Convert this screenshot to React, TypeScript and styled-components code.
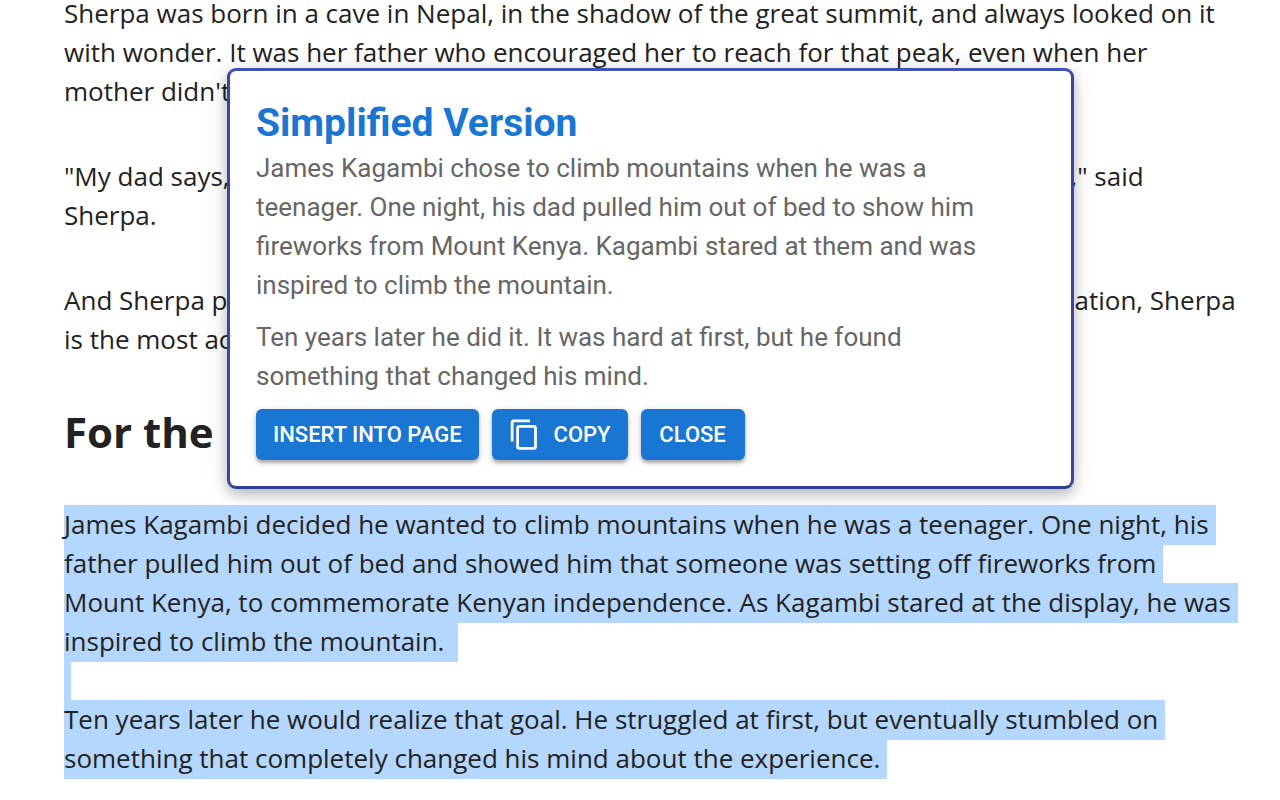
import React from 'react';
import styled, { createGlobalStyle } from 'styled-components';

const GlobalStyle = createGlobalStyle`
  *, *::before, *::after { box-sizing: border-box; }
  body { margin: 0; background: #fff; }
`;

const Page = styled.div`
  position: relative;
  min-height: 100vh;
  overflow: hidden;
`;

const Article = styled.article`
  margin-top: -6px;
  padding: 0 42px 22px 64px;
  color: #222;
  font-family: 'Open Sans', 'Noto Sans', sans-serif;
  font-size: 26px;
  line-height: 39px;
`;

const Paragraph = styled.p`
  margin: 0 0 46px;

  &:last-child { margin-bottom: 0; }
`;

const Heading = styled.h2`
  margin: 0 0 46px;
  font-size: 42px;
  line-height: 54px;
  font-weight: 700;
`;

const Selected = styled.mark`
  padding: 1px 7px 3px 0;
  background: #b3d7ff;
  color: inherit;
  box-decoration-break: clone;
  -webkit-box-decoration-break: clone;
`;

/* Stretch of a line that lies under the popup. */
const Covered = styled.span<{ $width: number }>`
  display: inline-block;
  width: ${({ $width }) => $width}px;
`;

const Popup = styled.section`
  position: absolute;
  top: 68px;
  left: 227px;
  right: 206px;
  padding: 26px;
  border: 3px solid;
  border-color: #3f51b5 #37489f #303f8f;
  border-radius: 9px;
  background: #fff;
  box-shadow: 0 6px 12px rgba(0, 0, 0, 0.2), 0 2px 24px rgba(0, 0, 0, 0.12);
  color: #666;
  font-family: Roboto, sans-serif;
  font-size: 26px;
  line-height: 39px;
`;

const PopupTitle = styled.h1`
  margin: 0;
  color: #1976d2;
  font-size: 39px;
  line-height: 52px;
  font-weight: 700;
`;

const PopupText = styled.p`
  margin: 0 0 13px;
  max-width: 750px;
`;

const Actions = styled.div`
  display: flex;
  gap: 13px;
`;

const Button = styled.button`
  display: flex;
  align-items: center;
  justify-content: center;
  gap: 13px;
  min-width: 104px;
  height: 51px;
  padding: 0 17px;
  border: 0;
  border-radius: 6px;
  background: #1976d2;
  box-shadow: 0 3px 3px rgba(0, 0, 0, 0.24), 0 2px 8px rgba(0, 0, 0, 0.16);
  color: #fff;
  font-family: inherit;
  font-size: 22px;
  font-weight: 500;
  text-transform: uppercase;
  cursor: pointer;

  svg { margin-left: -1px; }
`;

const CopyIcon = () => (
  <svg width="33" height="33" viewBox="0 0 24 24" fill="currentColor" aria-hidden="true">
    <path d="M16 1H4c-1.1 0-2 .9-2 2v14h2V3h12V1zm3 4H8c-1.1 0-2 .9-2 2v14c0 1.1.9 2 2 2h11c1.1 0 2-.9 2-2V7c0-1.1-.9-2-2-2zm0 16H8V7h11v14z" />
  </svg>
);

export default function App() {
  return (
    <>
      <GlobalStyle />
      <Page>
        <Article>
          <Paragraph>
            Sherpa was born in a cave in Nepal, in the shadow of the great summit, and always looked
            on it with wonder. It was her father who encouraged her to reach for that peak, even
            when her mother didn't
          </Paragraph>
          <Paragraph>
            "My dad says,
            <Covered $width={841} />
            ," said
            <br />
            Sherpa.
          </Paragraph>
          <Paragraph>
            And Sherpa p<Covered $width={847} />
            ation, Sherpa
            <br />
            is the most ac
          </Paragraph>
          <Heading>For the</Heading>
          <Paragraph>
            <Selected>
              James Kagambi decided he wanted to climb mountains when he was a teenager. One night,
              his father pulled him out of bed and showed him that someone was setting off fireworks
              from Mount Kenya, to commemorate Kenyan independence. As Kagambi stared at the
              display, he was inspired to climb the mountain.&nbsp;
            </Selected>
            <br />
            <Selected />
            <br />
            <Selected>
              Ten years later he would realize that goal. He struggled at first, but eventually
              stumbled on something that completely changed his mind about the experience.
            </Selected>
          </Paragraph>
        </Article>
        <Popup role="dialog" aria-labelledby="popup-title">
          <PopupTitle id="popup-title">Simplified Version</PopupTitle>
          <PopupText>
            James Kagambi chose to climb mountains when he was a teenager. One night, his dad pulled
            him out of bed to show him fireworks from Mount Kenya. Kagambi stared at them and was
            inspired to climb the mountain.
          </PopupText>
          <PopupText>
            Ten years later he did it. It was hard at first, but he found something that changed his
            mind.
          </PopupText>
          <Actions>
            <Button type="button">Insert into page</Button>
            <Button type="button">
              <CopyIcon />
              Copy
            </Button>
            <Button type="button">Close</Button>
          </Actions>
        </Popup>
      </Page>
    </>
  );
}
